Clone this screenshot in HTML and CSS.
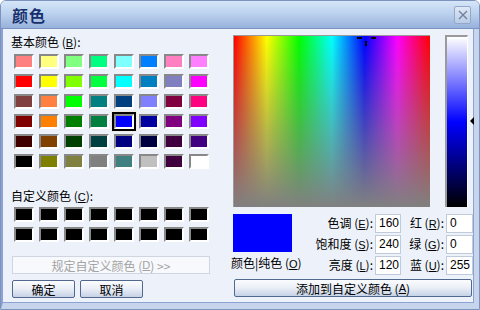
FILE: index.html
```html
<!DOCTYPE html>
<html lang="zh-CN">
<head>
<meta charset="utf-8">
<title>颜色</title>
<link rel="stylesheet" href="styles.css">
</head>
<body>
<div class="window">
  <div class="titlebar">
    <span class="title">颜色</span>
    <span class="close"><svg width="10" height="10" viewBox="0 0 10 10"><path d="M1 1L9 9M9 1L1 9" stroke="#6f7f9c" stroke-width="1.3" fill="none"/></svg></span>
  </div>
  <div class="content">
    <div class="left">
      <div class="label">基本颜色 (<u>B</u>):</div>
      <div class="swatches basic">
        <span class="sw" style="background:#ff8080"></span><span class="sw" style="background:#ffff80"></span><span class="sw" style="background:#80ff80"></span><span class="sw" style="background:#00ff80"></span><span class="sw" style="background:#80ffff"></span><span class="sw" style="background:#0080ff"></span><span class="sw" style="background:#ff80c0"></span><span class="sw" style="background:#ff80ff"></span>
        <span class="sw" style="background:#ff0000"></span><span class="sw" style="background:#ffff00"></span><span class="sw" style="background:#80ff00"></span><span class="sw" style="background:#00ff40"></span><span class="sw" style="background:#00ffff"></span><span class="sw" style="background:#0080c0"></span><span class="sw" style="background:#8080c0"></span><span class="sw" style="background:#ff00ff"></span>
        <span class="sw" style="background:#804040"></span><span class="sw" style="background:#ff8040"></span><span class="sw" style="background:#00ff00"></span><span class="sw" style="background:#008080"></span><span class="sw" style="background:#004080"></span><span class="sw" style="background:#8080ff"></span><span class="sw" style="background:#800040"></span><span class="sw" style="background:#ff0080"></span>
        <span class="sw" style="background:#800000"></span><span class="sw" style="background:#ff8000"></span><span class="sw" style="background:#008000"></span><span class="sw" style="background:#008040"></span><span class="sw selected" style="background:#0000ff"></span><span class="sw" style="background:#0000a0"></span><span class="sw" style="background:#800080"></span><span class="sw" style="background:#8000ff"></span>
        <span class="sw" style="background:#400000"></span><span class="sw" style="background:#804000"></span><span class="sw" style="background:#004000"></span><span class="sw" style="background:#004040"></span><span class="sw" style="background:#000080"></span><span class="sw" style="background:#000040"></span><span class="sw" style="background:#400040"></span><span class="sw" style="background:#400080"></span>
        <span class="sw" style="background:#000000"></span><span class="sw" style="background:#808000"></span><span class="sw" style="background:#808040"></span><span class="sw" style="background:#808080"></span><span class="sw" style="background:#408080"></span><span class="sw" style="background:#c0c0c0"></span><span class="sw" style="background:#400040"></span><span class="sw" style="background:#ffffff"></span>
      </div>
      <div class="label custom-label">自定义颜色 (<u>C</u>):</div>
      <div class="swatches custom">
        <span class="sw black"></span><span class="sw black"></span><span class="sw black"></span><span class="sw black"></span><span class="sw black"></span><span class="sw black"></span><span class="sw black"></span><span class="sw black"></span>
        <span class="sw black"></span><span class="sw black"></span><span class="sw black"></span><span class="sw black"></span><span class="sw black"></span><span class="sw black"></span><span class="sw black"></span><span class="sw black"></span>
      </div>
      <div class="btn disabled define">规定自定义颜色 (<u>D</u>) &gt;&gt;</div>
      <div class="btn-row">
        <div class="btn small">确定</div>
        <div class="btn small">取消</div>
      </div>
    </div>
    <div class="right">
      <div class="picker-row">
        <div class="spectrum">
          <div class="spectrum-shade"></div>
          <span class="cross ch-left"></span><span class="cross ch-right"></span><span class="cross cv-bottom"></span>
        </div>
        <div class="lum-wrap">
          <div class="lum"></div>
          <span class="lum-arrow"></span>
        </div>
      </div>
      <div class="info-row">
        <div class="preview-col">
          <div class="preview"></div>
          <div class="preview-label">颜色|纯色 (<u>O</u>)</div>
        </div>
        <div class="fields">
          <span class="flabel">色调 (<u>E</u>):</span><span class="input">160</span>
          <span class="flabel">红 (<u>R</u>):</span><span class="input">0</span>
          <span class="flabel">饱和度 (<u>S</u>):</span><span class="input">240</span>
          <span class="flabel">绿 (<u>G</u>):</span><span class="input">0</span>
          <span class="flabel">亮度 (<u>L</u>):</span><span class="input">120</span>
          <span class="flabel">蓝 (<u>U</u>):</span><span class="input">255</span>
        </div>
      </div>
      <div class="btn add">添加到自定义颜色 (<u>A</u>)</div>
    </div>
  </div>
</div>
</body>
</html>
```

FILE: styles.css
```css
html, body {
  margin: 0;
  padding: 0;
  background: #ffffff;
}

body {
  font-family: "Liberation Sans", "Noto Sans CJK SC", sans-serif;
  font-size: 12px;
  color: #000;
}

.window {
  width: 480px;
  height: 310px;
  box-sizing: border-box;
  display: flex;
  flex-direction: column;
  background: #edf2fa;
  border: 1px solid #7d93bd;
  border-radius: 6px 6px 0 0;
  overflow: hidden;
}

.titlebar {
  height: 27px;
  flex: none;
  display: flex;
  align-items: center;
  justify-content: space-between;
  padding: 0 8px 0 11px;
  background: linear-gradient(#d6e6f8 0%, #bcd2ee 45%, #98b1dc 100%);
  border-bottom: 1px solid #7b93c2;
}

.title {
  font-family: "Noto Sans CJK SC", sans-serif;
  font-size: 16px;
  font-weight: bold;
  color: #16306c;
  letter-spacing: 1px;
}

.close {
  width: 15px;
  height: 16px;
  display: flex;
  align-items: center;
  justify-content: center;
  border: 1px solid #93a7cb;
  border-radius: 2px;
  background: linear-gradient(#dfe9f6, #b9cbe6);
}

.content {
  flex: 1;
  display: flex;
  border-left: 2px solid #8aa3d2;
  border-right: 5px solid #c7d5ec;
  border-bottom: 6px solid #c7d5ec;
  box-shadow: inset -1px 0 0 #8aa3d2, inset 0 -1px 0 #8aa3d2;
}

.left {
  width: 218px;
  padding: 6px 0 0 8px;
  box-sizing: border-box;
  display: flex;
  flex-direction: column;
}

.label {
  font-family: "Noto Sans CJK SC", sans-serif;
  height: 14px;
  line-height: 14px;
  font-size: 12px;
}

.label u, .flabel u, .btn u, .preview-label u {
  font-family: "Liberation Sans", sans-serif;
  font-size: 11px;
}

.swatches {
  display: grid;
  grid-template-columns: repeat(8, 20px);
  grid-auto-rows: 15px;
  column-gap: 5px;
  row-gap: 5px;
  margin-left: 3px;
}

.basic {
  margin-top: 5px;
}

.custom-label {
  margin-top: 20px;
}

.custom {
  margin-top: 4px;
}

.sw {
  display: block;
  box-sizing: border-box;
  border-top: 2px solid #888888;
  border-left: 2px solid #888888;
  border-right: 2px solid #ffffff;
  border-bottom: 2px solid #ffffff;
}

.sw.black {
  background: #000000;
}

.sw.selected {
  outline: 2px solid #000000;
  outline-offset: 0px;
  box-shadow: 0 0 0 3px #f0ebe0;
}

.btn {
  box-sizing: border-box;
  height: 18px;
  display: flex;
  align-items: center;
  justify-content: center;
  font-family: "Noto Sans CJK SC", sans-serif;
  font-size: 12px;
  border: 1px solid #51688f;
  border-radius: 2px;
  background: linear-gradient(#fbfcfe 0%, #e9eef6 50%, #c6d2e6 100%);
}

.btn.define {
  margin-top: 14px;
  width: 198px;
  margin-left: 1px;
  border-color: #cfd6e2;
  background: #f7f9fc;
  color: #a3a3a3;
  border-radius: 0;
}

.btn-row {
  display: flex;
  gap: 5px;
  margin-top: 6px;
  margin-left: 1px;
}

.btn.small {
  width: 63px;
}

.right {
  width: 240px;
  margin-left: 12px;
  display: flex;
  flex-direction: column;
}

.picker-row {
  display: flex;
  margin-top: 6px;
}

.spectrum {
  position: relative;
  width: 200px;
  height: 172px;
  box-sizing: border-box;
  border-top: 1px solid #9a9a9a;
  border-left: 1px solid #9a9a9a;
  background: linear-gradient(to right, #ff0000 0%, #ffff00 16.67%, #00ff00 33.33%, #00ffff 50%, #0000ff 66.67%, #ff00ff 83.33%, #ff0000 100%);
}

.spectrum-shade {
  height: 100%;
  background: linear-gradient(to bottom, rgba(128,128,128,0) 0%, rgba(128,128,128,1) 100%);
}

.cross {
  position: absolute;
  background: #000;
}

.ch-left {
  left: 123px;
  top: 1px;
  width: 5px;
  height: 2px;
}

.ch-right {
  left: 137px;
  top: 1px;
  width: 5px;
  height: 2px;
}

.cv-bottom {
  left: 131px;
  top: 5px;
  width: 2px;
  height: 5px;
}

.lum-wrap {
  position: relative;
  margin-left: 15px;
  width: 28px;
}

.lum {
  width: 23px;
  height: 172px;
  box-sizing: border-box;
  border-top: 2px solid #9a9a9a;
  border-left: 2px solid #9a9a9a;
  border-right: 1px solid #ffffff;
  background: linear-gradient(to bottom, #ffffff 0%, #0000ff 50%, #000000 100%);
}

.lum-arrow {
  position: absolute;
  left: 25px;
  top: 82px;
  width: 0;
  height: 0;
  border-top: 4px solid transparent;
  border-bottom: 4px solid transparent;
  border-right: 4px solid #000;
}

.info-row {
  display: flex;
  margin-top: 7px;
}

.preview-col {
  display: flex;
  flex-direction: column;
  width: 78px;
}

.preview {
  width: 59px;
  height: 38px;
  background: #0000ff;
}

.preview-label {
  font-family: "Noto Sans CJK SC", sans-serif;
  margin-top: 4px;
  height: 14px;
  line-height: 14px;
  margin-left: -2px;
  white-space: nowrap;
}

.fields {
  flex: 1;
  display: grid;
  grid-template-columns: 67px 26px 41px 27px;
  grid-auto-rows: 19px;
  row-gap: 2px;
  column-gap: 2px;
  align-items: center;
}

.flabel {
  font-family: "Noto Sans CJK SC", sans-serif;
  text-align: right;
  white-space: nowrap;
  line-height: 19px;
}

.input {
  box-sizing: border-box;
  height: 19px;
  line-height: 17px;
  padding-left: 3px;
  background: #ffffff;
  border: 1px solid #bfcadb;
  font-family: "Liberation Sans", sans-serif;
  font-size: 12px;
}

.btn.add {
  margin-top: 4px;
  margin-left: 1px;
  width: 238px;
}
```
